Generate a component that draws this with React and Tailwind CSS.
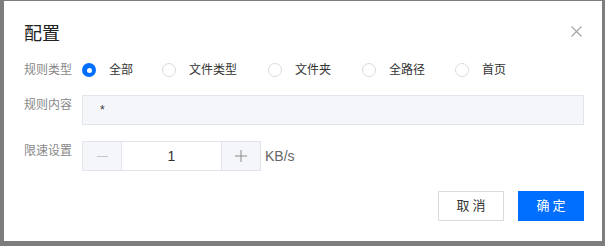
import { useState } from "react";

// widths measured from radio to next radio
const options = [
  { label: "全部", w: "w-[80px]" },
  { label: "文件类型", w: "w-[106px]" },
  { label: "文件夹", w: "w-[94px]" },
  { label: "全路径", w: "w-[93px]" },
  { label: "首页", w: "w-[60px]" },
];

// Speed-limit config dialog shown over a dimmed page
export default function App() {
  const [type, setType] = useState("全部");
  const [speed, setSpeed] = useState(1);

  return (
    <div
      className="h-[246px] w-[605px] overflow-hidden bg-[#7d7d7d] pl-[4px] pt-[1px]"
      style={{ fontFamily: '"Liberation Sans", "Noto Sans CJK SC", sans-serif' }}
    >
      <div className="relative h-[240px] w-[598px] bg-white pl-[20px] pr-[18px] pt-[21px]">
        {/* Header */}
        <h2 className="text-[18px] leading-[24px] text-[#222]">配置</h2>
        <button className="absolute right-[20px] top-[24px] flex h-[12px] w-[12px] items-center justify-center text-[#a3a3a3]">
          <svg width="11" height="11" viewBox="0 0 11 11" fill="none" stroke="currentColor" strokeWidth="1.1">
            <path d="M0.5 0.5 L10.5 10.5 M10.5 0.5 L0.5 10.5" />
          </svg>
        </button>

        {/* Rule type */}
        <div className="mt-[14px] flex h-[20px] items-center">
          <span className="w-[58px] text-[12px] text-[#888]">规则类型</span>
          <div className="flex items-center">
            {options.map((o) => (
              <label
                key={o.label}
                className={`flex cursor-pointer items-center gap-[13px] ${o.w}`}
                onClick={() => setType(o.label)}
              >
                {type === o.label ? (
                  <span className="flex h-[14px] w-[14px] items-center justify-center rounded-full bg-[#006eff]">
                    <span className="h-[5px] w-[5px] rounded-full bg-white" />
                  </span>
                ) : (
                  <span className="h-[14px] w-[14px] rounded-full border border-[#d9dbe3] bg-white" />
                )}
                <span className="text-[12px] text-[#333]">{o.label}</span>
              </label>
            ))}
          </div>
        </div>

        {/* Rule content */}
        <div className="mt-[15px] flex items-start">
          <span className="w-[58px] pt-[1px] text-[12px] leading-[18px] text-[#888]">规则内容</span>
          <div className="flex h-[30px] flex-1 items-center border border-[#e3e5ec] bg-[#f5f6fa] pl-[17px] text-[12px] text-[#333]">
            *
          </div>
        </div>

        {/* Speed limit */}
        <div className="mt-[16px] flex items-start">
          <span className="w-[58px] pt-[1px] text-[12px] leading-[18px] text-[#888]">限速设置</span>
          <div className="flex h-[30px] border border-[#e3e5ec]">
            <button
              className="flex w-[39px] items-center justify-center border-r border-[#e3e5ec] bg-[#f5f6fa]"
              onClick={() => setSpeed(Math.max(1, speed - 1))}
            >
              <span className="h-[1px] w-[11px] bg-[#c4c6cc]" />
            </button>
            <div className="flex w-[99px] items-center justify-center text-[14px] text-[#333]">{speed}</div>
            <button
              className="flex w-[39px] items-center justify-center border-l border-[#e3e5ec] bg-[#f5f6fa]"
              onClick={() => setSpeed(speed + 1)}
            >
              <svg width="12" height="12" viewBox="0 0 12 12" stroke="#8a8a8a" strokeWidth="1">
                <path d="M6 0 V12 M0 6 H12" />
              </svg>
            </button>
          </div>
          <span className="ml-[4px] text-[14px] leading-[30px] text-[#666]">KB/s</span>
        </div>

        {/* Footer */}
        <div className="mt-[20px] flex justify-end gap-[14px]">
          <button className="h-[30px] w-[66px] border border-[#dcdcdc] bg-white pl-[3px] text-[13px] tracking-[3px] text-[#333]">
            取消
          </button>
          <button className="h-[30px] w-[66px] bg-[#006eff] pl-[3px] text-[13px] tracking-[3px] text-white">
            确定
          </button>
        </div>
      </div>
    </div>
  );
}
